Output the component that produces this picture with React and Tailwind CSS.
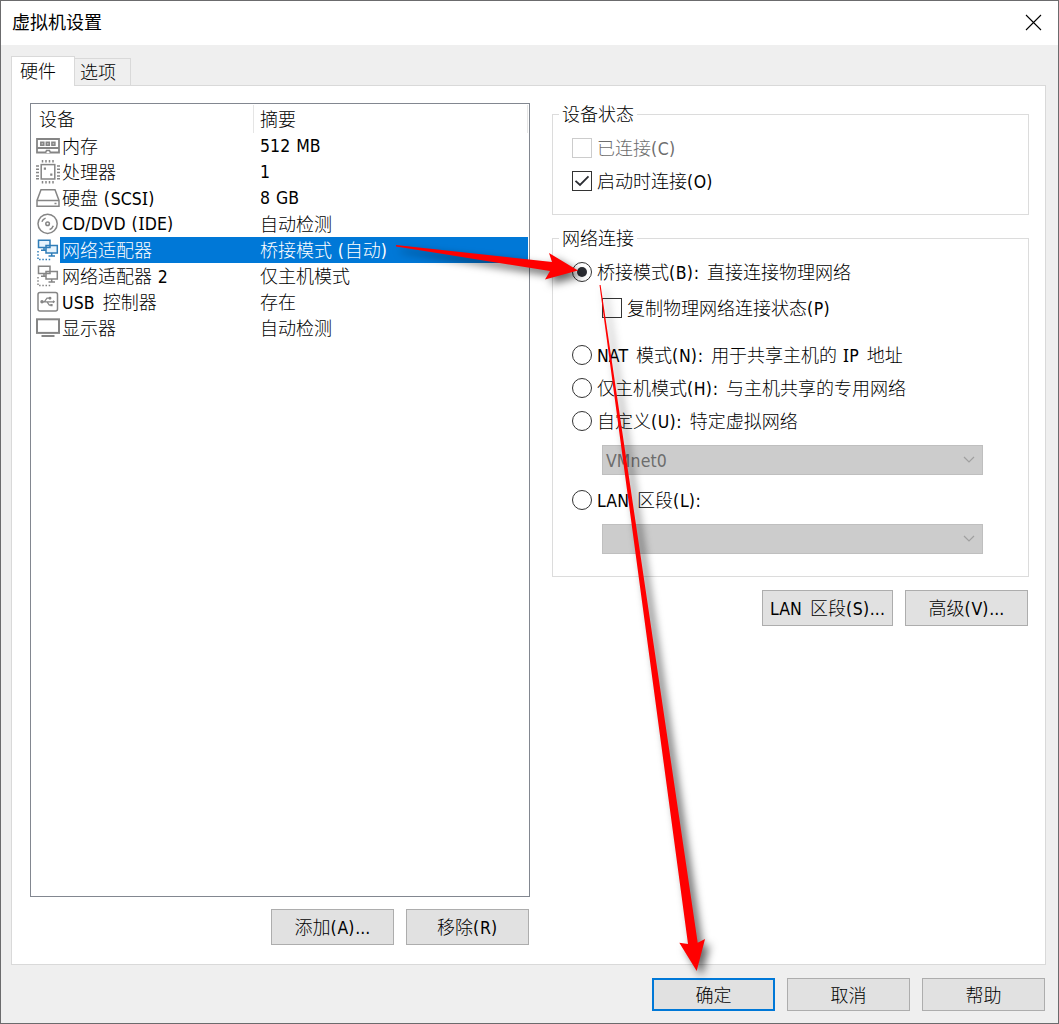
import React from "react";

const CJK = /[\u3400-\u9fff]/;

function Label({ children, className = "leading-[26px]" }) {
  const parts = String(children).match(/[\u3400-\u9fff]+|[()]| +|I|[^\u3400-\u9fff() I]+/g) || [];
  return (
    <span className={`whitespace-pre text-[18px] ${className}`}>
      {parts.map((part, i) => {
        if (CJK.test(part)) {
          return <span key={i} className="font-['Noto_Sans_CJK_SC',sans-serif] font-light">{part}</span>;
        }
        if (part === "I") {
          return <span key={i} className="font-['Noto_Sans',sans-serif] text-[17.5px] tracking-[0.3px]">{part}</span>;
        }
        const latin = "font-['DejaVu_Sans_Condensed','DejaVu_Sans',sans-serif] [font-stretch:condensed] text-[17.5px]";
        if (part === "(" || part === ")") {
          return <span key={i} className={`${latin} tracking-[0.7px]`}>{part}</span>;
        }
        if (part.trim() === "") {
          const beforeCjk = parts[i + 1] && CJK.test(parts[i + 1]);
          return <span key={i} className={`${latin} ${beforeCjk ? "tracking-[3px]" : "tracking-[0.8px]"}`}>{part}</span>;
        }
        return <span key={i} className={`${latin} tracking-[0.1px]`}>{part}</span>;
      })}
    </span>
  );
}

function Icon({ children, color = "#858585" }) {
  return (
    <svg width="24" height="26" viewBox="0 0 24 26" fill="none" stroke={color} strokeWidth="1.5" className="shrink-0">
      {children}
    </svg>
  );
}

const MemoryIcon = () => (
  <Icon>
    <path d="M1 6H23V19.5H1Z M1 15H23" strokeWidth="1.8" />
    <path d="M4.8 9.2h3v3h-3z M10.3 9.2h3v3h-3z M15.9 9.2h3v3h-3z" fill="#bbb" />
    <path d="M9.5 20l1-2.5h3l1 2.5" fill="#fff" />
  </Icon>
);
const CpuIcon = () => (
  <Icon>
    <rect x="5.2" y="5.6" width="13.6" height="14.4" />
    <path d="M6.5 1v2.5M10 1v2.5M13.5 1v2.5M17 1v2.5M6.5 22v2.5M10 22v2.5M13.5 22v2.5M17 22v2.5M0 7h3M0 10.3h3M0 13.6h3M0 16.9h3M0 19.8h3M21 7h3M21 10.3h3M21 13.6h3M21 16.9h3M21 19.8h3" />
    <path d="M7.8 9.7h2.2M14.2 15.7h2.2" strokeWidth="2.2" />
  </Icon>
);
const DiskIcon = () => (
  <Icon>
    <path d="M5 4.8H19L23 15.5V21.3H1V15.5ZM1 15.5H23" />
    <path d="M18.5 18.5h2" />
  </Icon>
);
const DiscIcon = () => (
  <Icon>
    <circle cx="11.6" cy="12.8" r="9.6" />
    <circle cx="11.6" cy="12.8" r="1.8" />
    <path d="M5.9 10.8A6 6 0 0 1 9.6 7.1M17.3 14.8A6 6 0 0 1 13.6 18.5" />
  </Icon>
);
const NetworkIcon = ({ active }) => (
  <Icon color={active ? "#2f7db8" : "#858585"}>
    <path d="M2.5 3.2H14V10.5H2.5Z M8 10.5V13.3M5 13.3h5M10 8.5H21.3V16H10ZM15.7 16v2.7M12.5 18.9h6.5" fill={active ? "#e6f3fc" : "#fff"} />
    <path d="M2 14V22.5H15.5" strokeDasharray="1.5 1.7" />
  </Icon>
);
const UsbIcon = () => (
  <Icon>
    <rect x="2" y="3.5" width="19.5" height="18.5" rx="2" />
    <path d="M6 12.8H18M8.3 12.8l2.7-3.6h2.5M11 12.8l2.3 3.4h2" strokeWidth="1.2" />
    <circle cx="6" cy="12.8" r="1" fill="#858585" />
    <circle cx="14" cy="9.2" r=".7" fill="#858585" />
    <path d="M15 15.7h1v1h-1zM17 11.8l1.2 1l-1.2 1" strokeWidth="1.2" />
  </Icon>
);
const DisplayIcon = () => (
  <Icon>
    <rect x="1" y="4.3" width="22" height="13.6" strokeWidth="2" />
    <path d="M5.5 21H18.5" strokeWidth="2" />
  </Icon>
);

const devices = [
  ["内存", "512 MB", <MemoryIcon />],
  ["处理器", "1", <CpuIcon />],
  ["硬盘 (SCSI)", "8 GB", <DiskIcon />],
  ["CD/DVD (IDE)", "自动检测", <DiscIcon />],
  ["网络适配器", "桥接模式 (自动)", <NetworkIcon active />],
  ["网络适配器 2", "仅主机模式", <NetworkIcon />],
  ["USB 控制器", "存在", <UsbIcon />],
  ["显示器", "自动检测", <DisplayIcon />],
];

function DeviceList() {
  return (
    <div className="h-[794px] w-[500px] border border-[#828790] bg-white">
      <div className="flex h-[29px] pt-px">
        <div className="flex w-[223px] border-r border-[#e5e5e5] pl-2"><Label>设备</Label></div>
        <div className="flex w-[274px] border-r border-[#e5e5e5] pl-[6px]"><Label>摘要</Label></div>
      </div>
      {devices.map(([name, summary, icon], i) => (
        <div key={i} className="flex h-[26px] pl-[5px]">
          {icon}
          <div className={`flex w-[468px] pl-[2px] ${i === 4 ? "bg-[#0078d7] text-white" : ""}`}>
            <div className="flex w-[198px]"><Label className="leading-[24px]">{name}</Label></div>
            <Label className="leading-[24px]">{summary}</Label>
          </div>
        </div>
      ))}
    </div>
  );
}

function Group({ title, className, children }) {
  return (
    <section className={`w-[477px] border border-[#dcdcdc] ${className}`}>
      <div className="-mt-[13px] ml-[6px] flex h-[26px] w-fit bg-white px-[3px]"><Label className="leading-[22px]">{title}</Label></div>
      {children}
    </section>
  );
}

function Check({ checked, disabled, children, className }) {
  return (
    <div className={`flex h-[26px] items-center gap-[5px] ${disabled ? "text-[#6d6d6d]" : ""} ${className}`}>
      <span className={`flex size-5 items-center justify-center border bg-white ${disabled ? "border-[#cccccc]" : "border-[#333]"}`}>
        {checked && (
          <svg width="16" height="14" viewBox="0 0 16 14" fill="none" stroke="#2b2d33" strokeWidth="1.8"><path d="M1.5 6.8L6 11L14.5 2.3" /></svg>
        )}
      </span>
      <Label>{children}</Label>
    </div>
  );
}

function Radio({ checked, children, className }) {
  return (
    <div className={`ml-[19px] flex h-[26px] items-center gap-[5px] ${className}`}>
      <span className="flex size-5 items-center justify-center rounded-full border border-[#333] bg-white">
        {checked && <span className="size-[10px] rounded-full bg-[#2b2d33]" />}
      </span>
      <Label>{children}</Label>
    </div>
  );
}

function Select({ children, className }) {
  return (
    <div className={`ml-[49px] flex h-[30px] w-[381px] items-center justify-between border border-[#bfbfbf] bg-[#ccc] pr-[7px] pl-[3px] text-[#6d6d6d] ${className}`}>
      <Label>{children}</Label>
      <svg width="12" height="8" viewBox="0 0 12 8" fill="none" stroke="#a0a0a0" strokeWidth="1.2"><path d="M1 1L6 6L11 1" /></svg>
    </div>
  );
}

function Button({ children, primary, className = "h-9 w-[123px]" }) {
  return (
    <button className={`flex items-center justify-center bg-[#e1e1e1] ${primary ? "border-2 border-[#0078d7]" : "border border-[#adadad]"} ${className}`}>
      <Label>{children}</Label>
    </button>
  );
}

function Arrows() {
  return (
    <svg width="1059" height="1024" className="pointer-events-none absolute -top-px -left-px [filter:drop-shadow(5px_5px_4px_rgba(0,0,0,0.6))]" fill="#f00">
      <path d="M396 245L552 262L549 253L578 270.5L545 279.5L550 271L396 246.4Z" />
      <path d="M599.5 285L600.6 285L697.7 942.7L705 939L696.7 971L679.3 942.7L688 944Z" />
    </svg>
  );
}

export default function App() {
  return (
    <div className="relative flex h-[1024px] w-[1059px] flex-col border border-[#6b6b6d] bg-[#efefef] text-black">
      <header className="flex h-11 items-center justify-between bg-white pr-[16px] pl-[11px]">
        <h1 className="pb-[3px] font-['Noto_Sans_CJK_SC',sans-serif] text-[18px]">虚拟机设置</h1>
        <svg width="17" height="17" viewBox="0 0 17 17" stroke="#000" strokeWidth="1.1" className="mb-px"><path d="M1 1L16 16M16 1L1 16" /></svg>
      </header>

      <nav className="mt-[11px] ml-[10px] flex h-[29px] items-end">
        <div className="z-10 -mb-px flex h-[30px] w-[64px] border border-b-0 border-[#d9d9d9] bg-white pl-2"><Label>硬件</Label></div>
        <div className="flex h-[27px] w-[56px] border border-l-0 border-b-0 border-[#d9d9d9] pl-[5px]"><Label className="leading-[24px]">选项</Label></div>
      </nav>

      <main className="ml-[10px] flex h-[880px] w-[1035px] gap-[22px] border border-[#d9d9d9] bg-white pt-[17px] pl-[18px]">
        <div>
          <DeviceList />
          <div className="mt-3 flex justify-end gap-3 pr-px">
            <Button>添加(A)...</Button>
            <Button>移除(R)</Button>
          </div>
        </div>
        <div className="pt-[11px]">
          <Group title="设备状态" className="h-[101px]">
            <Check disabled className="mt-[7px] ml-[19px]">已连接(C)</Check>
            <Check checked className="mt-[7px] ml-[19px]">启动时连接(O)</Check>
          </Group>
          <Group title="网络连接" className="mt-[23px] h-[339px]">
            <Radio checked className="mt-[7px]">桥接模式(B): 直接连接物理网络</Radio>
            <Check className="mt-[10px] ml-[49px]">复制物理网络连接状态(P)</Check>
            <Radio className="mt-[21px]">NAT 模式(N): 用于共享主机的 IP 地址</Radio>
            <Radio className="mt-[7px]">仅主机模式(H): 与主机共享的专用网络</Radio>
            <Radio className="mt-[7px]">自定义(U): 特定虚拟网络</Radio>
            <Select className="mt-[11px]">VMnet0</Select>
            <Radio className="mt-[12px]">LAN 区段(L):</Radio>
            <Select className="mt-[11px]">{""}</Select>
          </Group>
          <div className="mt-[13px] flex justify-end gap-3 pr-px">
            <Button className="h-9 w-[131px]">LAN 区段(S)...</Button>
            <Button>高级(V)...</Button>
          </div>
        </div>
      </main>

      <footer className="mt-[13px] flex justify-end gap-3 pr-[13px]">
        <Button primary className="h-[33px] w-[123px]">确定</Button>
        <Button className="h-[33px] w-[123px]">取消</Button>
        <Button className="h-[33px] w-[123px]">帮助</Button>
      </footer>
      <Arrows />
    </div>
  );
}
